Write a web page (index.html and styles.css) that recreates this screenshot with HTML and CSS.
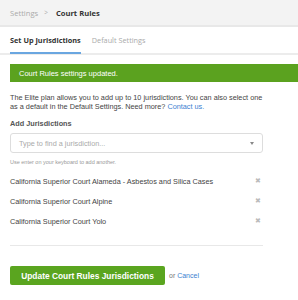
FILE: index.html
```html
<!DOCTYPE html>
<html>
<head>
<meta charset="utf-8">
<link rel="stylesheet" href="styles.css">
</head>
<body>
<header class="crumbs">
  <span class="crumb-link">Settings</span>
  <span class="crumb-sep">&gt;</span>
  <span class="crumb-current">Court Rules</span>
</header>
<nav class="tabs">
  <span class="tab active">Set Up Jurisdictions</span>
  <span class="tab">Default Settings</span>
</nav>
<main class="page">
  <div class="alert">Court Rules settings updated.</div>
  <p class="intro"><span>The Elite plan allows you to add up to 10 jurisdictions. You can also select one</span><br><span>as a default in the Default Settings. Need more?</span> <a class="link">Contact us.</a></p>
  <div class="form">
    <div class="label">Add Jurisdictions</div>
    <div class="select">
      <span class="placeholder">Type to find a jurisdiction...</span>
      <span class="caret"></span>
    </div>
    <div class="help">Use enter on your keyboard to add another.</div>
    <ul class="list">
      <li class="item"><span>California Superior Court Alameda - Asbestos and Silica Cases</span><span class="remove">✖</span></li>
      <li class="item"><span>California Superior Court Alpine</span><span class="remove">✖</span></li>
      <li class="item"><span>California Superior Court Yolo</span><span class="remove">✖</span></li>
    </ul>
    <hr class="rule">
    <div class="actions">
      <button class="btn">Update Court Rules Jurisdictions</button>
      <span class="or">or <a class="link">Cancel</a></span>
    </div>
  </div>
</main>
</body>
</html>
```
FILE: styles.css
```css
html, body { margin: 0; padding: 0; background: #fff; }
body { font-family: "Liberation Sans", Arial, sans-serif; color: #444; }

.crumbs {
  height: 25px;
  background: #f3f3f3;
  border-bottom: 2px solid #e8e8e8;
  display: flex;
  align-items: center;
  padding-left: 10px;
  font-family: "Open Sans", sans-serif;
  font-size: 7.6px;
}
.crumb-link { color: #aaa; }
.crumb-sep { color: #aaa; margin: 0 8px 0 6px; font-size: 6.5px; }
.crumb-current { color: #333; font-weight: 700; }

.tabs {
  display: flex;
  gap: 11px;
  height: 26px;
  padding-left: 10px;
  border-bottom: 2px solid #ececec;
  font-family: "Open Sans", sans-serif;
  font-size: 7.3px;
}
.tab {
  display: flex;
  align-items: center;
  color: #aaa;
  border-bottom: 2px solid transparent;
  margin-bottom: -1px;
}
.tab.active { color: #333; font-weight: 700; border-bottom-color: #6aa6e0; }

.page { padding-left: 10px; padding-top: 9px; }
.alert {
  background: #5ba21f;
  color: #fff;
  font-size: 7.5px;
  height: 18px;
  display: flex;
  align-items: center;
  padding-left: 9px;
}
.intro {
  width: 270px;
  margin: 11px 0 0;
  font-size: 7.3px;
  line-height: 9px;
  color: #444;
  white-space: nowrap;
}
.link { color: #3d7fd1; }

.form { width: 253px; }
.label { margin-top: 8px; font-size: 7.3px; font-weight: 700; color: #555; }
.select {
  margin-top: 5px;
  height: 18px;
  border: 1px solid #ddd;
  border-radius: 3px;
  display: flex;
  align-items: center;
  justify-content: space-between;
  padding: 0 8px;
}
.placeholder { font-size: 7.3px; color: #aaa; }
.caret {
  width: 0; height: 0;
  border-left: 2.5px solid transparent;
  border-right: 2.5px solid transparent;
  border-top: 3px solid #888;
}
.help { margin-top: 6px; font-size: 5.5px; color: #999; }
.list { list-style: none; margin: 6px 0 0; padding: 0; }
.item {
  display: flex;
  justify-content: space-between;
  align-items: center;
  height: 20px;
  font-size: 7.3px;
  color: #444;
}
.remove { color: #bbb; font-size: 7px; margin-right: 2px; }
.rule { border: 0; border-top: 1px solid #e8e8e8; margin: 14px 0 0; }
.actions { display: flex; align-items: center; gap: 4px; margin-top: 20px; }
.btn {
  background: #5aa51f;
  color: #fff;
  border: 0;
  border-radius: 2px;
  height: 19px;
  width: 155px;
  padding: 0;
  font-family: "Liberation Sans", Arial, sans-serif;
  font-weight: 700;
  font-size: 8.4px;
}
.or { font-size: 7px; color: #777; }
```
